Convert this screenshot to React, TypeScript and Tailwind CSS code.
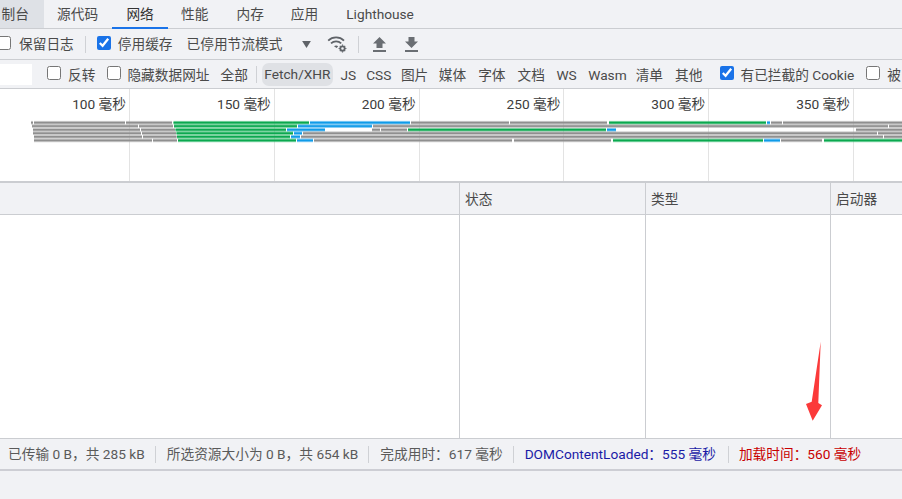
import React from "react";

const FONT = "[font-family:'Roboto','Noto_Sans_CJK_SC',sans-serif]";

type Seg = [number, number, string];
const G = "#a3a3a3";
const E = "#1fb45f";
const B = "#27a5ec";
const rows: { y: number; segs: Seg[] }[] = [
  { y: 122.7, segs: [[31, 33, G], [34, 125, G], [126, 172, G], [173.5, 309, E], [310, 410, B], [411, 509, G], [510, 607, G], [609, 766, E], [767, 770, B], [771, 782, G], [783, 902, G]] },
  { y: 126.1, segs: [[32, 138, G], [139, 173, G], [174, 297, E], [298, 372, B], [373, 888, G], [889, 902, G]] },
  { y: 129.8, segs: [[33, 140, G], [141, 175, G], [175.5, 286, E], [287, 325, B], [372, 380, G], [381, 407, G], [408, 606, E], [607, 616, B], [856, 902, G]] },
  { y: 133.2, segs: [[33, 141, G], [142, 176, G], [176.5, 293, E], [294, 302, B], [303, 877, G], [878, 902, G]] },
  { y: 136.8, segs: [[34, 142, G], [143, 176.5, G], [177, 290, E], [291, 300, B], [301, 883, G], [884, 902, G]] },
  { y: 140.4, segs: [[34, 152, G], [153, 177, G], [178, 296, E], [297, 313, B], [314, 512, G], [514, 611, G], [613, 763, E], [764, 780, B], [781, 822, G], [824, 902, E]] },
];

function Check({ checked = false }: { checked?: boolean }) {
  return (
    <input
      type="checkbox"
      checked={checked}
      readOnly
      className="m-0 h-[14px] w-[14px] shrink-0 accent-[#1a73e8]"
    />
  );
}

function Divider({ className = "" }: { className?: string }) {
  return <div className={`h-[17px] w-px shrink-0 bg-[#cfd1d5] ${className}`} />;
}

const filters: [string, string][] = [
  ["JS", "ml-[7.6px]"],
  ["CSS", "ml-[10px]"],
  ["图片", "ml-[9.5px]"],
  ["媒体", "ml-[10.5px]"],
  ["字体", "ml-[12px]"],
  ["文档", "ml-[12px]"],
  ["WS", "ml-[11.5px]"],
  ["Wasm", "ml-[11.5px]"],
  ["清单", "ml-[9px]"],
  ["其他", "ml-[12px]"],
];

export default function App() {
  return (
    <div className={`relative flex h-[499px] w-[902px] flex-col overflow-hidden bg-[#f1f2f5] text-[13.7px] leading-none text-[#4a4a4a] ${FONT}`}>
      {/* tabs */}
      <div className="flex h-[29px] shrink-0 items-stretch border-b border-[#cbcdd1] [&>div]:pt-[2px]">
        <div className="flex w-[44px] items-center justify-end overflow-hidden whitespace-nowrap bg-[#dee1e6] pr-[15px]">制台</div>
        <div className="flex items-center pl-[13px] pr-[14px]">源代码</div>
        <div className="relative flex w-[56px] items-center justify-center text-[#333]">
          网络
          <div className="absolute bottom-[-1px] left-0 right-0 h-[2px] bg-[#1a73e8]" />
        </div>
        <div className="flex items-center pl-[13px] pr-[28px]">性能</div>
        <div className="flex items-center pr-[27px]">内存</div>
        <div className="flex items-center pr-[28px]">应用</div>
        <div className="flex items-center">Lighthouse</div>
      </div>

      {/* toolbar */}
      <div className="flex h-[31px] shrink-0 items-center whitespace-nowrap border-b border-[#cbcdd1] [&>span]:pt-[2px] [&>div]:mt-[1px]">
        <div className="ml-[-3px]"><Check /></div>
        <span className="ml-[8px]">保留日志</span>
        <Divider className="ml-[11px]" />
        <div className="ml-[11px]"><Check checked /></div>
        <span className="ml-[7px]">停用缓存</span>
        <span className="ml-[14px]">已停用节流模式</span>
        <svg className="ml-[20px]" width="9" height="7" viewBox="0 0 10 8"><path d="M0 0h10L5 8z" fill="#5f6368" /></svg>
        <svg className="ml-[16px]" width="20" height="18" viewBox="0 0 20 18" fill="none">
          <path d="M1.2 5.6C5.6 1.3 12.6 1.3 17 5.6" stroke="#5f6368" strokeWidth="1.8" />
          <path d="M4 8.4c2.9-2.7 7.3-2.7 10.2 0" stroke="#5f6368" strokeWidth="1.8" />
          <path d="M7 11.2c1.3-1.1 2.9-1.1 4.2 0L9.6 13z" fill="#5f6368" />
          <circle cx="15.5" cy="13.5" r="2.2" stroke="#5f6368" strokeWidth="1.8" />
          <path d="M15.5 9.6v1.2M15.5 16.2v1.2M11.6 13.5h1.2M18.2 13.5h1.2M12.8 10.8l.8.8M17.4 15.4l.8.8M12.8 16.2l.8-.8M17.4 11.6l.8-.8" stroke="#5f6368" strokeWidth="1.2" />
        </svg>
        <Divider className="ml-[11px]" />
        <svg className="ml-[14px]" width="13" height="15" viewBox="0 0 13 15"><path d="M6.5 0 13 6.5H9.5V11h-6V6.5H0zM0 13h13v2H0z" fill="#6a6e73" /></svg>
        <svg className="ml-[19px]" width="13" height="15" viewBox="0 0 13 15"><path d="M3.5 0h6v4.5H13L6.5 11 0 4.5h3.5zM0 13h13v2H0z" fill="#6a6e73" /></svg>
      </div>

      {/* filter bar */}
      <div className="flex h-[29px] shrink-0 items-center whitespace-nowrap border-b border-[#cbcdd1] pt-[1px] [&>span]:pt-[2px]">
        <div className="h-[21px] w-[32px] shrink-0 bg-white" />
        <div className="ml-[15px]"><Check /></div>
        <span className="ml-[7px]">反转</span>
        <div className="ml-[12px]"><Check /></div>
        <span className="ml-[6px]">隐藏数据网址</span>
        <span className="ml-[11px]">全部</span>
        <Divider className="ml-[8px]" />
        <div className="ml-[5px] flex h-[23px] w-[71px] shrink-0 items-center justify-center rounded-[7px] bg-[#dfe1e5] pt-[1px]">Fetch/XHR</div>
        {filters.map(([t, c]) => (
          <span key={t} className={c}>{t}</span>
        ))}
        <div className="ml-[18px]"><Check checked /></div>
        <span className="ml-[6px]">有已拦截的 Cookie</span>
        <div className="ml-[12px]"><Check /></div>
        <span className="ml-[7px]">被</span>
      </div>

      {/* overview */}
      <div className="relative flex h-[92px] shrink-0 bg-white">
        {[130, 144.8, 144.8, 144.8, 144.8, 144.8].map((w, i) => (
          <div
            key={i}
            style={{ width: w }}
            className="flex h-full shrink-0 justify-end border-r border-[#e3e3e3] pr-[3px] pt-[9px] text-[#3c3c3c]"
          >
            {(100 + i * 50) + " 毫秒"}
          </div>
        ))}
        <svg className="absolute left-0 top-0" width="902" height="92" viewBox="0 89 902 92">
          {rows.map((r) =>
            r.segs.map(([a, b, c], i) => (
              <g key={i}>
                <rect x={a} y={r.y - 1.8} width={b - a} height="3.6" fill={c} opacity="0.6" />
                <rect x={a} y={r.y - 0.8} width={b - a} height="1.6" fill={c === G ? "#8f8f8f" : c === E ? "#0ba84f" : "#0f9be8"} />
              </g>
            ))
          )}
        </svg>
      </div>

      {/* table header */}
      <div className="flex h-[33px] shrink-0 items-stretch border-t-2 border-[#cbcdd1] [&>div]:pt-[2px]">
        <div className="w-[460px] shrink-0 border-r border-[#cbcdd1]" />
        <div className="flex w-[186px] shrink-0 items-center border-r border-[#cbcdd1] pl-[5px]">状态</div>
        <div className="flex w-[185px] shrink-0 items-center border-r border-[#cbcdd1] pl-[5px]">类型</div>
        <div className="flex items-center pl-[5px]">启动器</div>
      </div>

      {/* table body */}
      <div className="flex h-[225px] shrink-0 items-stretch border-y border-[#cbcdd1] bg-white">
        <div className="w-[460px] shrink-0 border-r border-[#cbcdd1]" />
        <div className="w-[186px] shrink-0 border-r border-[#cbcdd1]" />
        <div className="w-[185px] shrink-0 border-r border-[#cbcdd1]" />
      </div>

      {/* status bar */}
      <div className="flex h-[32px] shrink-0 items-center whitespace-nowrap border-b-[2px] border-[#cdced4] pl-[8px] text-[#5a5a5a] [&>span]:pt-[2px]">
        <span>已传输 0 B，共 285 kB</span>
        <Divider className="ml-[10px]" />
        <span className="ml-[11px]">所选资源大小为 0 B，共 654 kB</span>
        <Divider className="ml-[10px]" />
        <span className="ml-[11px]">完成用时：617 毫秒</span>
        <Divider className="ml-[10px]" />
        <span className="ml-[11px] text-[#1a1aa6]">DOMContentLoaded：555 毫秒</span>
        <Divider className="ml-[12px]" />
        <span className="ml-[10px] text-[#c80000]">加载时间：560 毫秒</span>
      </div>

      {/* annotation arrow */}
      <svg className="absolute left-[800px] top-[335px]" width="30" height="92" viewBox="800 335 30 92">
        <path d="M820.7 341.7 818.3 403 822 405.3 812.7 420.7 806 404 811.7 401.7z" fill="#fb3a3a" />
      </svg>
    </div>
  );
}
